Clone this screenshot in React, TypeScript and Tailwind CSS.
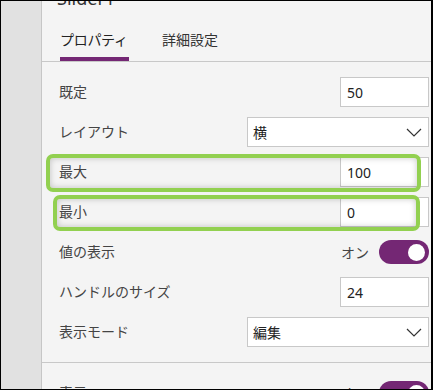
import React from "react";

const font = { fontFamily: '"Noto Sans", "Noto Sans CJK JP", sans-serif' };

function Chevron() {
  return (
    <svg width="16" height="9" viewBox="0 0 16 9" className="block">
      <path d="M1 1 L8 8 L15 1" fill="none" stroke="#333" strokeWidth="1.2" />
    </svg>
  );
}

function Label({ children }: { children: React.ReactNode }) {
  return <div className="text-[14px] leading-[20px] text-[#444] whitespace-nowrap">{children}</div>;
}

function TextBox({ value }: { value: string }) {
  return (
    <div className="w-[89px] h-[30px] bg-white border border-[#c8c8c8] pl-[6px] flex items-center text-[14px] text-[#222]">
      {value}
    </div>
  );
}

function Dropdown({ value }: { value: string }) {
  return (
    <div className="w-[182px] h-[30px] bg-white border border-[#c8c8c8] pl-[5px] pr-[6px] flex items-center justify-between text-[14px] text-[#222]">
      <span>{value}</span>
      <Chevron />
    </div>
  );
}

function Toggle() {
  return (
    <div className="flex items-center gap-[10px]">
      <span className="text-[14px] text-[#444]">オン</span>
      <div className="w-[50px] h-[24px] rounded-full bg-[#742774] flex items-center justify-end pr-[4px]">
        <div className="w-[17px] h-[17px] rounded-full bg-white" />
      </div>
    </div>
  );
}

function Row({ label, children }: { label: string; children: React.ReactNode }) {
  return (
    <div className="h-[30px] flex items-center justify-between">
      <Label>{label}</Label>
      {children}
    </div>
  );
}

export default function App() {
  return (
    <div
      className="relative w-[433px] h-[390px] overflow-hidden border-t border-l border-b border-r-2 border-black bg-[#f4f4f4]"
      style={font}
    >
      <div className="flex h-full">
        <div className="w-[41px] bg-[#e1e1e1] border-r border-[#c6c6c6] shrink-0" />
        <div className="flex-1 bg-[#f4f4f4]">
          <div className="-mt-[12px] pl-[15px] text-[18px] leading-[18px] text-[#333] whitespace-nowrap">Slider1</div>
          <div className="flex pl-[18px] border-b border-[#c8c8c8]">
            <div className="w-[69px] pt-[23px] pb-[7px] border-b-4 border-[#742774] text-[14px] leading-[20px] text-[#222] whitespace-nowrap tracking-[-0.3px]">
              プロパティ
            </div>
            <div className="ml-[33px] pt-[23px] pb-[11px] text-[14px] leading-[20px] text-[#333] whitespace-nowrap">
              詳細設定
            </div>
          </div>
          <div className="pl-[17px] pr-[2px] pt-[15px] pb-[15px] flex flex-col gap-[10px] border-b border-[#c8c8c8]">
            <Row label="既定"><TextBox value="50" /></Row>
            <Row label="レイアウト"><Dropdown value="横" /></Row>
            <Row label="最大"><TextBox value="100" /></Row>
            <Row label="最小"><TextBox value="0" /></Row>
            <Row label="値の表示"><Toggle /></Row>
            <Row label="ハンドルのサイズ"><TextBox value="24" /></Row>
            <Row label="表示モード"><Dropdown value="編集" /></Row>
          </div>
          <div className="pl-[17px] pr-[2px] pt-[15px]">
            <Row label="表示"><Toggle /></Row>
          </div>
        </div>
      </div>
      <div className="absolute left-[45px] top-[153px] w-[375px] h-[38px] rounded-[7px] border-4 border-[#92d050] shadow-[inset_0_0_6px_rgba(0,0,0,0.22)]" />
      <div className="absolute left-[52px] top-[194px] w-[367px] h-[36px] rounded-[7px] border-4 border-[#92d050] shadow-[inset_0_0_6px_rgba(0,0,0,0.22)]" />
    </div>
  );
}
